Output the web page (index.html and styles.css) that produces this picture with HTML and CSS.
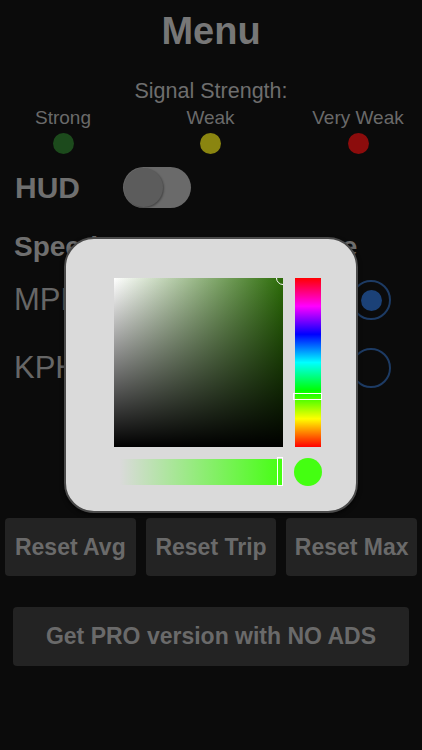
FILE: index.html
```html
<!DOCTYPE html>
<html>
<head>
<meta charset="utf-8">
<link rel="stylesheet" href="styles.css">
</head>
<body>
<div class="screen">
  <h1 class="title">Menu</h1>
  <div class="signal-title">Signal Strength:</div>
  <div class="levels">
    <div class="level"><span class="level-label">Strong</span><span class="dot dot-green"></span></div>
    <div class="level"><span class="level-label">Weak</span><span class="dot dot-yellow"></span></div>
    <div class="level"><span class="level-label">Very Weak</span><span class="dot dot-red"></span></div>
  </div>
  <div class="hud-row">
    <span class="hud-label">HUD</span>
    <span class="toggle"><span class="knob"></span></span>
  </div>
  <h2 class="section">Speed Measurement Type</h2>
  <div class="unit-row">
    <span class="unit-label">MPH</span>
    <span class="radio radio-on"><span class="radio-dot"></span></span>
  </div>
  <div class="unit-row unit-row-2">
    <span class="unit-label">KPH</span>
    <span class="radio"></span>
  </div>
  <div class="reset-row">
    <div class="btn">Reset Avg</div>
    <div class="btn">Reset Trip</div>
    <div class="btn">Reset Max</div>
  </div>
  <div class="pro">Get PRO version with NO ADS</div>

  <div class="picker">
    <div class="sv"><span class="sv-marker"></span></div>
    <div class="hue"><span class="hue-marker"></span></div>
    <div class="alpha"><span class="alpha-marker"></span></div>
    <div class="swatch"></div>
  </div>
</div>
</body>
</html>
```

FILE: styles.css
```css
html, body {
  margin: 0;
  padding: 0;
  background: #0b0b0b;
}
.screen {
  position: relative;
  width: 422px;
  height: 750px;
  overflow: hidden;
  background: #0b0b0b;
  font-family: "Liberation Sans", Arial, sans-serif;
  color: #6c6c6c;
}
.title {
  margin: 11px 0 0;
  height: 40px;
  line-height: 40px;
  font-size: 38px;
  font-weight: 700;
  text-align: center;
  color: #777777;
}
.signal-title {
  margin-top: 28px;
  height: 24px;
  line-height: 24px;
  font-size: 21.5px;
  text-align: center;
  color: #6e6e6e;
}
.levels {
  display: flex;
  justify-content: space-between;
  padding: 0 14px 0 13px;
  margin-top: 4px;
}
.level {
  width: 100px;
  display: flex;
  flex-direction: column;
  align-items: center;
}
.level-label {
  height: 22px;
  line-height: 22px;
  font-size: 19px;
  color: #6a6a6a;
  white-space: nowrap;
}
.dot {
  margin-top: 4px;
  width: 21px;
  height: 21px;
  border-radius: 50%;
}
.dot-green { background: #1c4a1c; }
.dot-yellow { background: #8a8510; }
.dot-red { background: #8c0c0c; }

.hud-row {
  display: flex;
  align-items: center;
  margin-top: 13px;
  height: 41px;
  padding-left: 15px;
}
.hud-label {
  width: 108px;
  font-size: 30px;
  font-weight: 700;
  color: #6f6f6f;
}
.toggle {
  position: relative;
  width: 68px;
  height: 41px;
  border-radius: 21px;
  background: #6a6a6a;
  display: flex;
  align-items: center;
}
.knob {
  width: 39px;
  height: 39px;
  margin-left: 1px;
  border-radius: 50%;
  background: #5c5c5c;
  box-shadow: 1px 1px 2px rgba(0,0,0,0.35);
}
.section {
  margin: 22px 0 0;
  padding-left: 14px;
  height: 34px;
  line-height: 34px;
  font-size: 28px;
  font-weight: 700;
  color: #6f6f6f;
  white-space: nowrap;
}
.unit-row {
  display: flex;
  justify-content: space-between;
  align-items: center;
  height: 40px;
  margin-top: 16px;
  padding: 0 31px 0 14px;
}
.unit-row-2 {
  margin-top: 28px;
}
.unit-label {
  font-size: 31px;
  color: #666666;
}
.radio {
  width: 36px;
  height: 36px;
  border: 2px solid #1d3b64;
  border-radius: 50%;
  display: flex;
  align-items: center;
  justify-content: center;
}
.radio-dot {
  width: 21px;
  height: 21px;
  border-radius: 50%;
  background: #1b4177;
}
.reset-row {
  display: flex;
  gap: 10px;
  padding: 0 5px;
  margin-top: 130px;
}
.btn {
  flex: 1;
  height: 58px;
  line-height: 58px;
  background: #232323;
  border-radius: 4px;
  text-align: center;
  font-size: 23px;
  font-weight: 700;
  color: #6a6a6a;
  white-space: nowrap;
}
.pro {
  margin: 31px 13px 0 13px;
  height: 59px;
  line-height: 59px;
  background: #232323;
  border-radius: 4px;
  text-align: center;
  font-size: 23px;
  font-weight: 700;
  color: #6a6a6a;
  white-space: nowrap;
}

/* colour picker popup */
.picker {
  position: absolute;
  left: 64px;
  top: 237px;
  width: 290px;
  height: 272px;
  box-sizing: content-box;
  border: 2px solid #4a4a4a;
  border-radius: 30px;
  background: #dadada;
  box-shadow: 0 2px 4px rgba(0,0,0,0.6);
  display: grid;
  grid-template-columns: 169px 26px;
  grid-template-rows: 169px 26px;
  column-gap: 12px;
  row-gap: 12px;
  align-content: start;
  justify-content: start;
}
.picker > * {
  position: relative;
}
.sv {
  margin-left: 48px;
  margin-top: 39px;
  width: 169px;
  height: 169px;
  overflow: hidden;
  background:
    linear-gradient(to bottom, rgba(0,0,0,0) 0%, #000 100%),
    linear-gradient(to right, #ffffff 0%, #2c6c08 100%);
}
.sv-marker {
  position: absolute;
  right: -7px;
  top: -7px;
  width: 12px;
  height: 12px;
  border: 1.5px solid #ffffff;
  border-radius: 50%;
}
.hue {
  margin-left: 48px;
  margin-top: 39px;
  width: 26px;
  height: 169px;
  background: linear-gradient(to bottom,
    #ff0000 0%, #ff00ff 16.7%, #0000ff 33.3%, #00ffff 50%,
    #00ff00 66.7%, #ffff00 83.3%, #ff0000 100%);
}
.hue-marker {
  position: absolute;
  left: -2px;
  top: 115px;
  width: 27px;
  height: 5px;
  border: 1.5px solid #ffffff;
}
.alpha {
  margin-left: 54px;
  margin-top: 39px;
  width: 163px;
  height: 26px;
  background: linear-gradient(to right, rgba(68,255,17,0) 0%, #44ff11 100%);
}
.alpha-marker {
  position: absolute;
  left: 157px;
  top: -2px;
  width: 4px;
  height: 27px;
  border: 1.5px solid #ffffff;
}
.swatch {
  margin-left: 47px;
  margin-top: 38px;
  width: 28px;
  height: 28px;
  border-radius: 50%;
  background: #44ff11;
}
```
